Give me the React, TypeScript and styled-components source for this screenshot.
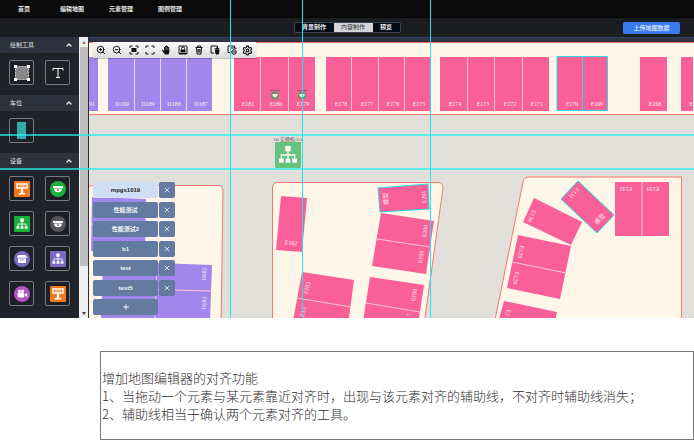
import React from 'react';
import styled, { createGlobalStyle } from 'styled-components';
import { ZoomIn, ZoomOut, ChevronUp, X, Plus, Settings } from 'lucide-react';

const GlobalStyle = createGlobalStyle`
  * { box-sizing: border-box; }
  body { margin: 0; background: #fff; font-family: "Liberation Sans", "Noto Sans CJK SC", sans-serif; }
  button { font-family: inherit; padding: 0; margin: 0; cursor: pointer; }
`;

const Editor = styled.section`
  position: relative;
  overflow: hidden;
`;

const NavBar = styled.nav`
  display: flex;
  gap: 25px;
  height: 18px;
  padding: 0 18px;
  align-items: center;
  background: #0b0b0b;
  border-bottom: 1px solid #050505;
`;

const NavLink = styled.a`
  color: #e8e8e8;
  font-size: 6px;
  line-height: 10px;
  font-weight: 700;
  text-decoration: none;
  white-space: nowrap;
  &:first-child { margin-right: 5px; }
`;

const ModeBar = styled.header`
  display: grid;
  grid-template-columns: 1fr auto 1fr;
  align-items: center;
  height: 19px;
  padding: 0 14px;
  background: #1b1d21;
`;

const Tabs = styled.div`
  grid-column: 2;
  display: flex;
  height: 11px;
  border: 1px solid #3c4350;
  border-radius: 2px;
  overflow: hidden;
`;

const Tab = styled.button<{ $active?: boolean; $narrow?: boolean }>`
  width: ${p => (p.$narrow ? 27 : 39)}px;
  border: 0;
  font-size: 6px;
  line-height: 9px;
  font-weight: ${p => (p.$active ? 400 : 700)};
  color: ${p => (p.$active ? '#333' : '#e6e8ec')};
  background: ${p => (p.$active ? '#d3d5d9' : '#020a18')};
`;

const Upload = styled.button`
  justify-self: end;
  width: 57px;
  height: 12px;
  border: 0;
  border-radius: 2px;
  background: #3a7cf0;
  color: #fff;
  font-size: 6px;
  line-height: 12px;
`;

const Workspace = styled.div`
  display: flex;
  height: 281px;
`;

const Sidebar = styled.aside`
  flex: none;
  width: 79px;
  background: #20232a;
  overflow: hidden;
`;

const GroupHeader = styled.button`
  display: flex;
  width: 100%;
  height: 16px;
  padding: 0 6px 0 10px;
  align-items: center;
  justify-content: space-between;
  border: 0;
  background: #2e323e;
  color: #e4e6ea;
  font-size: 6px;
  line-height: 10px;
`;

const Tiles = styled.div`
  display: grid;
  grid-template-columns: 25px 25px;
  gap: 10px 11px;
  padding: 7px 9px 10px;
`;

const Tile = styled.button`
  display: flex;
  height: 25px;
  align-items: center;
  justify-content: center;
  border: 1px solid #777a80;
  border-radius: 2px;
  background: #1d2026;
  color: #fff;
`;

const ScrollTrack = styled.div`
  flex: none;
  display: flex;
  flex-direction: column;
  width: 10px;
  background: #efefef;
  border-right: 1px solid #2b2e35;
`;

const ScrollArrow = styled.div`
  display: flex;
  height: 10px;
  align-items: center;
  justify-content: center;
`;

const ScrollThumb = styled.div`
  height: 219px;
  margin: 0 0 auto 1px;
  background: #bebebe;
`;

const Stage = styled.main`
  position: relative;
  flex: 1;
  min-width: 0;
  border-top: 1px solid #2e4569;
  background: #2f3440;
  padding-top: 4px;
`;

const MapSvg = styled.svg`
  display: block;
  width: 100%;
  height: 276px;
`;

const MapText = styled.text<{ $dark?: boolean }>`
  fill: ${p => (p.$dark ? '#555' : '#ffeaf3')};
  font-family: "Liberation Serif", "Noto Sans CJK SC", serif;
  font-size: ${p => (p.$dark ? 5 : 6)}px;
  text-anchor: middle;
  dominant-baseline: central;
`;

const Toolbar = styled.div`
  position: absolute;
  left: 4px;
  top: 4px;
  display: grid;
  grid-template-columns: repeat(10, 1fr);
  width: 163px;
  height: 16px;
  background: linear-gradient(#fcfcfc, #dcdcdc);
  box-shadow: 0 1px 1px rgba(0, 0, 0, 0.2);
`;

const ToolButton = styled.button`
  display: flex;
  align-items: center;
  justify-content: center;
  border: 0;
  background: none;
  color: #111;
`;

const Layers = styled.ul`
  position: absolute;
  left: 4px;
  top: 144px;
  display: flex;
  flex-direction: column;
  justify-content: space-between;
  height: 133px;
  margin: 0;
  padding: 0;
  list-style: none;
`;

const LayerRow = styled.li`
  display: flex;
  gap: 1px;
`;

const LayerButton = styled.button<{ $active?: boolean }>`
  display: flex;
  align-items: center;
  justify-content: center;
  width: 65px;
  height: 16px;
  border: 0;
  border-radius: 2px;
  font-size: 6px;
  line-height: 10px;
  font-weight: 700;
  color: ${p => (p.$active ? '#1b1d21' : '#f2f5fa')};
  background: ${p => (p.$active ? '#d0def3' : '#637ba0')};
`;

const RemoveButton = styled(LayerButton)`
  width: 16px;
`;

const Guide = styled.div<{ $axis: 'x' | 'y'; $at: number }>`
  position: absolute;
  pointer-events: none;
  background: ${p => (p.$axis === 'x' ? '#22e5ea' : 'rgba(40, 236, 240, 0.7)')};
  ${p => (p.$axis === 'x'
    ? `left: ${p.$at}px; top: 0; bottom: 0; width: 1px;`
    : `top: ${p.$at}px; left: 0; right: 0; height: 2px;`)}
`;

const Note = styled.section`
  margin: 33px 0 0 100px;
  padding: 17px 1px 16px;
  border: 1px solid #777;
  color: #2e2e2e;
  font-family: "Noto Sans CJK SC", sans-serif;
  font-weight: 300;
  font-size: 13px;
  line-height: 18px;
`;

const NoteLine = styled.p`
  margin: 0;
`;

type Kind = 'gate' | 'dome' | 'switch' | 'store' | 'camera';

function DeviceShape({ kind }: { kind: Kind }) {
  switch (kind) {
    case 'gate':
      return <><path d="M3 3h10v4H3z" fill="none" stroke="#fff" strokeWidth="1.4" /><path d="M6.8 7h2.4v5H6.8zM4.8 12h6.4v1.6H4.8z" /><path d="M5 5h6" stroke="#fff" strokeWidth=".8" /></>;
    case 'dome':
      return <><path d="M3 5h10v2H3zM4 7.6h8a4 3.7 0 0 1-8 0z" /><circle cx="8" cy="9" r="1" fill="#777" /></>;
    case 'switch':
      return <><path d="M6.3 2.5h3.4v3.2H6.3zM2.5 10.2h2.8v2.6H2.5zM6.6 10.2h2.8v2.6H6.6zM10.7 10.2h2.8v2.6h-2.8z" /><path d="M8 5v5.5M3.9 10.5V8h8.2v2.5" fill="none" stroke="#fff" strokeWidth=".8" /></>;
    case 'store':
      return <><path d="M4.3 4h7.4l1.6 2.7H2.7z" /><path d="M4 7.4h8V12H4z" /><path d="M6 9h4" stroke="#7b67c4" strokeWidth=".8" /></>;
    case 'camera':
      return <><circle cx="5.4" cy="5.2" r="1.4" /><circle cx="8.6" cy="5" r="1.6" /><rect x="3.6" y="6.6" width="6.6" height="4.8" rx=".8" /><path d="M10.8 8.4l2.4-1.5v4.2l-2.4-1.5z" /></>;
  }
}

function DeviceIcon({ kind, color, round }: { kind: Kind; color: string; round?: boolean }) {
  return (
    <svg width="16" height="16" viewBox="0 0 16 16" fill="#fff" aria-hidden="true">
      {round ? <circle cx="8" cy="8" r="8" fill={color} /> : <rect width="16" height="16" rx="1" fill={color} />}
      <DeviceShape kind={kind} />
    </svg>
  );
}

const devices: { name: string; kind: Kind; color: string; round?: boolean }[] = [
  { name: '道闸', kind: 'gate', color: '#f27a1d' },
  { name: '半球相机', kind: 'dome', color: '#1db13c', round: true },
  { name: '交换机', kind: 'switch', color: '#1cb03a' },
  { name: '离线相机', kind: 'dome', color: '#555', round: true },
  { name: '终端', kind: 'store', color: '#7b67c4', round: true },
  { name: '网络节点', kind: 'switch', color: '#7b67c4' },
  { name: '摄像机', kind: 'camera', color: '#b653c4', round: true },
  { name: '显示屏', kind: 'gate', color: '#f27a1d' },
];

function Glyph({ children }: { children: React.ReactNode }) {
  return (
    <svg width="10" height="10" viewBox="0 0 20 20" fill="none" stroke="#111" strokeWidth="2" aria-hidden="true">
      {children}
    </svg>
  );
}

const corners = <path d="M2 6V2h5M13 2h5v4M18 14v4h-5M7 18H2v-4" />;

const tools = [
  { name: '放大', icon: <ZoomIn size={10} strokeWidth={2.4} /> },
  { name: '缩小', icon: <ZoomOut size={10} strokeWidth={2.4} /> },
  { name: '适应', icon: <Glyph>{corners}<path d="M5 6h10v8H5z" fill="#111" stroke="none" /></Glyph> },
  { name: '全屏', icon: <Glyph>{corners}</Glyph> },
  { name: '拖动', icon: <Glyph><path d="M1 10l2-1 3 3V4h2V2h2V1h2v1h2v2h2l1 9-2 6H8z" fill="#111" stroke="none" /><path d="M8.5 4v6M11.5 3v7M14 5v5" stroke="#eee" strokeWidth=".7" /></Glyph> },
  { name: '锁定', icon: <Glyph><rect x="2" y="2" width="16" height="16" rx="1" /><path d="M5 9h10v6H5z" fill="#111" stroke="none" /><path d="M7 9V7a3 3 0 0 1 6 0v2M2 17h16" /></Glyph> },
  { name: '删除', icon: <Glyph><path d="M3 5h14M7 5V2h6v3M5 5l1 13h8l1-13M8 8v7M10 8v7M12 8v7" /></Glyph> },
  { name: '清空', icon: <Glyph><path d="M8 16H2V2h13v4" /><path d="M9 8h10M12 8V6h4v2M11 10l1 8h5l1-8z" fill="#111" /></Glyph> },
  { name: '禁用图层', icon: <Glyph><path d="M8 15H2V2h13v4" /><path d="M7 9V6h11v2" /><circle cx="14" cy="14" r="4.500" /><path d="M11 14h6" /></Glyph> },
  { name: '设置', icon: <Settings size={11} strokeWidth={2.4} /> },
];

const layers = ['mpgs1019', '性能测试', '性能测试2', 'b1', 'test', 'test5'];

const PINK = '#f96097';
const PURPLE = '#a386ec';
const CYAN = '#2bd9e4';

const topBays: { x: number; w: number; label: string; lx: number; color?: string }[] = [
  { x: 89, w: 9, label: '91', lx: 92, color: PURPLE },
  { x: 108, w: 26, label: 'D190', lx: 122, color: PURPLE },
  { x: 135, w: 25, label: 'D189', lx: 148, color: PURPLE },
  { x: 161, w: 25, label: 'D188', lx: 174, color: PURPLE },
  { x: 187, w: 25, label: 'D187', lx: 201, color: PURPLE },
  { x: 234, w: 26, label: 'E181', lx: 248 },
  { x: 261, w: 27, label: 'E180', lx: 276 },
  { x: 289, w: 26, label: 'E179', lx: 303 },
  { x: 326, w: 25, label: 'E178', lx: 341 },
  { x: 352, w: 26, label: 'E177', lx: 367 },
  { x: 379, w: 25, label: 'E176', lx: 393 },
  { x: 405, w: 25, label: 'E175', lx: 419 },
  { x: 440, w: 27, label: 'E174', lx: 455 },
  { x: 468, w: 26, label: 'E173', lx: 483 },
  { x: 495, w: 27, label: 'E172', lx: 510 },
  { x: 523, w: 26, label: 'E171', lx: 537 },
  { x: 557, w: 25, label: 'E170', lx: 572 },
  { x: 583, w: 25, label: 'E169', lx: 597 },
  { x: 640, w: 27, label: 'E168', lx: 655 },
  { x: 681, w: 12, label: 'E', lx: 691 },
];

const blocks: { points: string; color?: string; outline?: boolean; split?: string }[] = [
  { points: '92,197 146,199 145,253 91,251', color: PURPLE, split: '91,224 146,226' },
  { points: '103,261 212,265 210,322 101,318', color: PURPLE, split: '102,288 211,291' },
  { points: '281,196 307,198 302,252 276,250' },
  { points: '378,188 428,184 429,209 380,212', outline: true },
  { points: '381,213 434,221 426,274 372,266', split: '377,239 430,247' },
  { points: '370,277 424,285 418,325 363,321', split: '366,303 420,312' },
  { points: '302,272 354,280 348,325 293,321', split: '297,298 351,307' },
  { points: '534,198 582,222 571,245 523,222' },
  { points: '578,181 614,215 597,233 561,199', outline: true },
  { points: '615,182 669,182 669,236 615,236', split: '642,182 642,236' },
  { points: '518,235 571,246 560,299 507,288', split: '512,262 566,273' },
  { points: '504,301 557,312 553,334 498,323' },
];

const blockLabels: [string, number, number, number][] = [
  ['D082', 204, 274, -88], ['D081', 204, 303, -88],
  ['E182', 291, 243, 5], ['E201', 424, 197, -94], ['模型', 386, 199, -94],
  ['E200', 425, 231, -82], ['E199', 421, 257, -82], ['E198', 414, 295, -82], ['7', 409, 315, -82],
  ['E183', 307, 288, -76], ['E13', 303, 312, -76],
  ['E130', 532, 216, 115], ['E131', 574, 193, 133], ['模型', 600, 219, -47],
  ['E132', 626, 189, 180], ['E133', 653, 189, 180],
  ['E129', 521, 252, 101], ['E128', 516, 278, 101], ['E1', 508, 313, 101],
];

function ParkingMap() {
  return (
    <MapSvg viewBox="89 42 605 276" preserveAspectRatio="xMinYMin slice" role="img" aria-label="停车场地图">
      <rect x="89" y="42" width="605" height="276" fill="#e1dfd9" />
      <g fill="#fef6e9" stroke="#fa766e" strokeWidth="1">
        <path d="M80 42.500H700V114.500H80z" />
        <path d="M80 188L93 185.500H218Q223 185.500 223 191L221 330H80z" />
        <path d="M278 182.500H438Q443 182.500 443 188L424 325H272.500V188Q272.500 182.500 278 182.500z" />
        <path d="M529 177H681.500V325H494L523 182Q524 177 529 177z" />
      </g>
      {topBays.map(b => (
        <g key={b.label}>
          <rect x={b.x} y="57" width={b.w} height="54" fill={b.color ?? PINK} />
          <MapText x={b.lx} y="104">{b.label}</MapText>
        </g>
      ))}
      <path d="M557 56.500H607.500V110.500H557zM582.500 57V110" fill="none" stroke={CYAN} />
      <g opacity=".65">
        <path d="M134 57h1v54h-1zM160 57h1v54h-1zM186 57h1v54h-1z" fill="#d9cbf7" />
        <path d="M260 57h1v54h-1zM288 57h1v54h-1zM351 57h1v54h-1zM378 57h1v54h-1zM404 57h1v54h-1zM467 57h1v54h-1zM494 57h1v54h-1zM522 57h1v54h-1z" fill="#fba9c6" />
      </g>
      {[275, 302].map(x => (
        <g key={x}>
          <path d={`M${x - 5} 90.500h10`} stroke="#a55276" />
          <circle cx={x} cy="95.500" r="4" fill="#6f8f6c" />
          <path d={`M${x - 2.5} 94h5v1.500q-2.500 4-5 0z`} fill="#e8f6e8" />
        </g>
      ))}
      {blocks.map(b => (
        <g key={b.points}>
          <polygon points={b.points} fill={b.color ?? PINK} stroke={b.outline ? CYAN : 'none'} />
          {b.split && <polyline points={b.split} stroke="#fcc6d9" fill="none" />}
        </g>
      ))}
      <path d="M157 263L155 320" stroke="#d9cbf7" />
      {blockLabels.map(([t, x, y, r]) => (
        <MapText key={`${t}${x}`} transform={`translate(${x} ${y}) rotate(${r})`}>{t}</MapText>
      ))}
      <rect x="275" y="142" width="26" height="26" rx="1" fill="#67c37b" />
      <g transform="translate(275 142) scale(1.625)" fill="#fff"><DeviceShape kind="switch" /></g>
      <MapText $dark x="288" y="139">16.交换机/2A</MapText>
    </MapSvg>
  );
}

function Group({ title, children }: { title: string; children: React.ReactNode }) {
  return (
    <section>
      <GroupHeader aria-expanded="true">{title}<ChevronUp size={8} strokeWidth={4} /></GroupHeader>
      <Tiles>{children}</Tiles>
    </section>
  );
}

export default function App() {
  return (
    <>
      <GlobalStyle />
      <Editor>
        <NavBar>
          {['首页', '编辑地图', '元素管理', '图例管理'].map(t => <NavLink key={t} href="#">{t}</NavLink>)}
        </NavBar>
        <ModeBar>
          <Tabs>
            <Tab>背景制作</Tab>
            <Tab $active>内容制作</Tab>
            <Tab $narrow>预览</Tab>
          </Tabs>
          <Upload>上传地图数据</Upload>
        </ModeBar>
        <Workspace>
          <Sidebar>
            <Group title="绘制工具">
              <Tile aria-label="多边形">
                <svg width="16" height="16" viewBox="0 0 16 16" fill="#fff">
                  <rect x="1.500" y="1.500" width="13" height="13" fill="#888" stroke="#ccc" strokeDasharray="2 1" />
                  <path d="M0 0h3v3H0zM13 0h3v3h-3zM0 13h3v3H0zM13 13h3v3h-3z" />
                </svg>
              </Tile>
              <Tile aria-label="文字">
                <svg width="12" height="12" viewBox="0 0 12 12" fill="none" stroke="#fff">
                  <path d="M1 3.500V1.500h10v2M6 1.500v9M4 10.500h4" />
                </svg>
              </Tile>
            </Group>
            <Group title="车位">
              <Tile aria-label="车位">
                <svg width="9" height="17" viewBox="0 0 9 17"><rect width="9" height="17" fill="#35a9a9" /></svg>
              </Tile>
            </Group>
            <Group title="设备">
              {devices.map(d => (
                <Tile key={d.name} aria-label={d.name}><DeviceIcon kind={d.kind} color={d.color} round={d.round} /></Tile>
              ))}
            </Group>
          </Sidebar>
          <ScrollTrack aria-hidden="true">
            <ScrollArrow><svg width="4" height="3" viewBox="0 0 4 3"><path d="M0 3l2-3 2 3z" fill="#888" /></svg></ScrollArrow>
            <ScrollThumb />
            <ScrollArrow><svg width="4" height="3" viewBox="0 0 4 3"><path d="M0 0l2 3 2-3z" fill="#444" /></svg></ScrollArrow>
          </ScrollTrack>
          <Stage>
            <ParkingMap />
            <Toolbar role="toolbar">
              {tools.map(t => <ToolButton key={t.name} aria-label={t.name}>{t.icon}</ToolButton>)}
            </Toolbar>
            <Layers>
              {layers.map((name, i) => (
                <LayerRow key={name}>
                  <LayerButton $active={i === 0}>{name}</LayerButton>
                  <RemoveButton aria-label={`删除 ${name}`}><X size={8} strokeWidth={2.4} /></RemoveButton>
                </LayerRow>
              ))}
              <LayerRow><LayerButton aria-label="新增"><Plus size={8} strokeWidth={3} /></LayerButton></LayerRow>
            </Layers>
          </Stage>
        </Workspace>
        <Guide $axis="x" $at={230} />
        <Guide $axis="x" $at={302} />
        <Guide $axis="x" $at={430} />
        <Guide $axis="y" $at={134} />
        <Guide $axis="y" $at={168} />
      </Editor>
      <Note>
        <NoteLine>增加地图编辑器的对齐功能</NoteLine>
        <NoteLine>1、当拖动一个元素与某元素靠近对齐时，出现与该元素对齐的辅助线，不对齐时辅助线消失；</NoteLine>
        <NoteLine>2、辅助线相当于确认两个元素对齐的工具。</NoteLine>
      </Note>
    </>
  );
}
